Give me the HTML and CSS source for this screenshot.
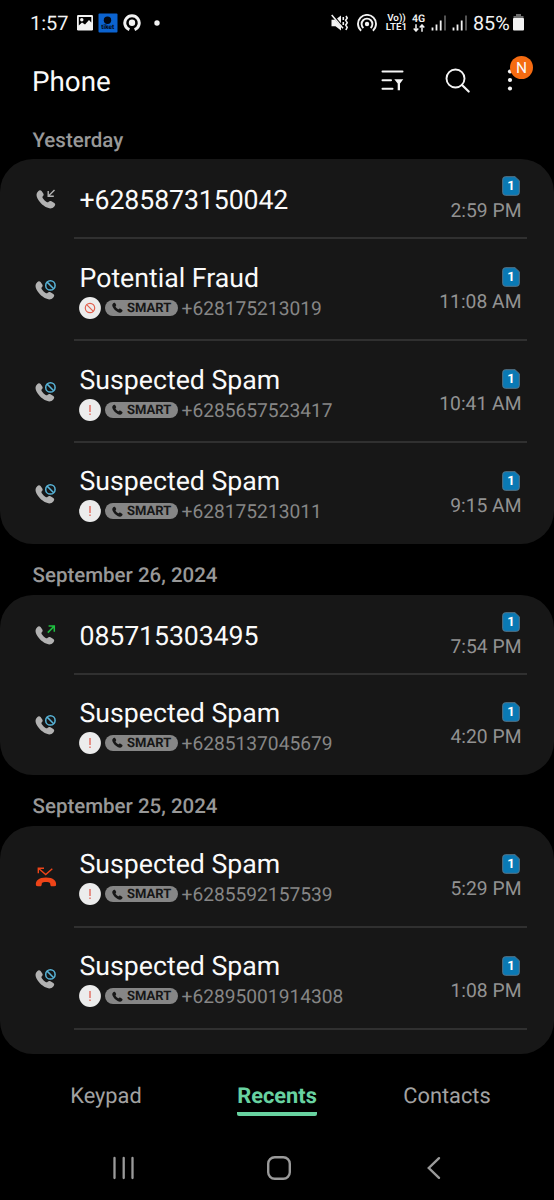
FILE: index.html
```html
<!DOCTYPE html>
<html lang="en">
<head>
<meta charset="utf-8">
<title>Phone</title>
<link rel="stylesheet" href="styles.css">
</head>
<body>
<svg class="defs" width="0" height="0" aria-hidden="true">
  <symbol id="handset" viewBox="0 0 20 20">
    <path d="M2.2 2.3C3.2 1 4.6.8 5.6 2L7.300 4.500C8 5.600 7.600 6.600 6.800 7.300C6.200 8 6.300 8.600 7 9.500C8 10.900 9.200 12 10.600 12.900C11.400 13.400 12 13.400 12.700 12.700C13.500 11.900 14.500 11.700 15.500 12.300L18.300 14C19.500 14.900 19.500 16 18.500 17.200C16.500 19.700 13.800 20 11 18.600C6.300 16.300 2.400 12.200.8 7.700C.2 5.600.6 3.700 2.200 2.300Z"/>
  </symbol>
  <symbol id="incoming" viewBox="0 0 22 22">
    <use href="#handset" x="1" y="1" width="20" height="20" fill="#b2b2b2"/>
    <path d="M19.500 2L13.500 8M13.200 3V8.300H18.800" fill="none" stroke="#b2b2b2" stroke-width="1.400"/>
  </symbol>
  <symbol id="outgoing" viewBox="0 0 22 22">
    <use href="#handset" x="0" y="1" width="20" height="20" fill="#b2b2b2"/>
    <path d="M12.800 8.600L19 2.400M13.600 2H19.300V7.800" fill="none" stroke="#1fc040" stroke-width="1.500"/>
  </symbol>
  <symbol id="blocked" viewBox="0 0 22 22">
    <use href="#handset" x="0" y="1" width="20" height="20" fill="#b2b2b2"/>
    <circle cx="15.400" cy="6.400" r="6.200" fill="#171717"/>
    <circle cx="15.400" cy="6.400" r="4.700" fill="none" stroke="#58b4d8" stroke-width="1.500"/>
    <path d="M12.100 3.100L18.700 9.700" stroke="#58b4d8" stroke-width="1.500"/>
  </symbol>
  <symbol id="missed" viewBox="0 0 22 22">
    <path d="M.9 18.800C.5 15 3.500 11.600 11 11.600S21.500 15 21.100 18.800C21 20 20.400 20.200 19.300 20.200H17C15.800 20.200 15.300 19.600 15.300 18.400C15.300 17 14.800 16.600 13.500 16.300C12 16 10 16 8.500 16.300C7.200 16.600 6.700 17 6.700 18.400C6.700 19.600 6.200 20.200 5 20.200H2.700C1.600 20.200 1 20 .9 18.800Z" fill="#ee4418"/>
    <path d="M17.300 2.800L10.700 8.600L4 2.800M3.300 7.300V2.200H9" fill="none" stroke="#ee4418" stroke-width="1.400"/>
  </symbol>
  <symbol id="warn" viewBox="0 0 22 22">
    <circle cx="11" cy="11" r="10.900" fill="#ececec"/>
    <path d="M11 6V13M11 14.500V16.100" stroke="#e2695c" stroke-width="1.400"/>
  </symbol>
  <symbol id="fraud" viewBox="0 0 22 22">
    <circle cx="11" cy="11" r="10.900" fill="#ececec"/>
    <circle cx="11" cy="11" r="4.700" fill="none" stroke="#e2614f" stroke-width="1.200"/>
    <path d="M7.700 7.700L14.300 14.300" stroke="#e2614f" stroke-width="1.200"/>
  </symbol>
  <symbol id="signal" viewBox="0 0 16 16">
    <path d="M1.500 12.500V15.500M5.500 9.500V15.500M9.700 5.500V15.500" stroke="#f2f2f2" stroke-width="1.800"/>
    <path d="M14 .5V15.500" stroke="#5c5c5c" stroke-width="1.800"/>
  </symbol>
  <symbol id="sim" viewBox="0 0 18 20">
    <path d="M3.400.7H13L17.300 4.700V16.500Q17.300 19.300 14.600 19.300H3.400Q.7 19.300.7 16.600V3.400Q.7.700 3.400.700Z" fill="#0a79b4" stroke="#56768a" stroke-width="1"/>
  </symbol>
</svg>

<div class="screen">
  <div class="status">
    <span class="clock">1:57</span>
    <svg class="s-picture" width="16" height="16" viewBox="0 0 16 16"><rect width="16" height="15.500" rx="1.200" fill="#f2f2f2"/><path d="M1.800 10.500L5 7.500L8 9.500L12 5L14.300 7.500V2H1.800Z" fill="#000"/><circle cx="4.800" cy="4.800" r="1.700" fill="#f2f2f2"/></svg>
    <svg class="s-tiket" width="20" height="20" viewBox="0 0 20 20"><rect x=".5" y=".5" width="19" height="19" rx="1" fill="#0b63d0"/><circle cx="9.500" cy="7.200" r="3.700" fill="#03070f"/><text x="9.800" y="16.200" class="tiket-text">tiket</text></svg>
    <svg class="s-ring" width="18" height="18" viewBox="0 0 18 18"><path d="M6.400 15.700A7.200 7.200 0 1 1 11.600 15.700" fill="none" stroke="#f2f2f2" stroke-width="3"/><circle cx="9" cy="8.800" r="3.200" fill="#f2f2f2"/></svg>
    <svg class="s-dot" width="6" height="6" viewBox="0 0 6 6"><circle cx="3" cy="3" r="2.700" fill="#f2f2f2"/></svg>
    <div class="status-right">
      <svg class="s-mute" width="17" height="18" viewBox="0 0 17 18"><path d="M.5 5.700H4L10 12.500V16.500L4.500 12.200H.5Z" fill="#f2f2f2"/><path d="M6 4.500L10 1.500V9.300Z" fill="#f2f2f2"/><path d="M.7 1L12 14.300" stroke="#f2f2f2" stroke-width="1.500"/><path d="M12.300 3V6M12.300 8V11M15 2L16.200 4L14.700 6.300L16.200 8.700L14.700 11L16.200 13.400L14.900 16" fill="none" stroke="#f2f2f2" stroke-width="1.600"/></svg>
      <svg class="s-hotspot" width="20" height="18" viewBox="0 0 20 18"><circle cx="10" cy="10" r="2.200" fill="#f2f2f2"/><path d="M6.400 14A5.400 5.400 0 1 1 13.600 14M4.100 16.700A9 9 0 1 1 15.900 16.700" fill="none" stroke="#f2f2f2" stroke-width="1.900"/></svg>
      <span class="volte"><span>Vo))</span><span>LTE1</span></span>
      <span class="fourg"><span>4G</span><svg width="12" height="8" viewBox="0 0 12 8"><path d="M3 .3V7M.7 4.500L3 7L5.300 4.500M9 7.700V1M6.700 3.500L9 1L11.300 3.500" fill="none" stroke="#f2f2f2" stroke-width="1.500"/></svg></span>
      <svg class="s-sig" width="16" height="16"><use href="#signal"/></svg>
      <svg class="s-sig" width="16" height="16"><use href="#signal"/></svg>
      <span class="percent">85%</span>
      <svg class="s-battery" width="11" height="17" viewBox="0 0 11 17"><path d="M3 0H8V2H10.500V5H.5V2H3Z" fill="#6c6c6c"/><rect y="4" width="11" height="12.500" rx="1" fill="#f2f2f2"/></svg>
    </div>
  </div>

  <header class="appbar">
    <h1>Phone</h1>
    <svg class="a-filter" width="24" height="24" viewBox="0 0 24 24"><path d="M2.500 3.500H22.500M2.500 12.200H11M2.500 20.700H12.500" stroke="#f5f5f5" stroke-width="2" stroke-linecap="round"/><path d="M14.300 11.200H23.300L20 15.500V22.300H17.700V15.500Z" fill="#f5f5f5"/></svg>
    <svg class="a-search" width="26" height="26" viewBox="0 0 26 26"><circle cx="10.500" cy="10.500" r="9" fill="none" stroke="#f5f5f5" stroke-width="1.900"/><path d="M17 17L23.700 23.500" stroke="#f5f5f5" stroke-width="2.200" stroke-linecap="round"/></svg>
    <div class="more">
      <svg width="6" height="22" viewBox="0 0 6 22"><g fill="#f5f5f5"><circle cx="3" cy="2.500" r="2.100"/><circle cx="3" cy="11" r="2.100"/><circle cx="3" cy="19.500" r="2.100"/></g></svg>
      <span class="new-badge">N</span>
    </div>
  </header>

  <main class="log">
    <h2 class="first">Yesterday</h2>
    <section class="card">
      <div class="row short">
        <svg class="kind"><use href="#incoming"/></svg>
        <div class="who"><div class="name">+6285873150042</div></div>
        <div class="when"><span class="sim"><svg><use href="#sim"/></svg><b>1</b></span><span>2:59 PM</span></div>
      </div>
      <div class="row">
        <svg class="kind"><use href="#blocked"/></svg>
        <div class="who"><div class="name">Potential Fraud</div>
          <div class="detail"><svg class="flag"><use href="#fraud"/></svg><span class="smart"><svg><use href="#handset"/></svg><b>SMART</b></span><span class="number">+628175213019</span></div></div>
        <div class="when"><span class="sim"><svg><use href="#sim"/></svg><b>1</b></span><span>11:08 AM</span></div>
      </div>
      <div class="row">
        <svg class="kind"><use href="#blocked"/></svg>
        <div class="who"><div class="name">Suspected Spam</div>
          <div class="detail"><svg class="flag"><use href="#warn"/></svg><span class="smart"><svg><use href="#handset"/></svg><b>SMART</b></span><span class="number">+6285657523417</span></div></div>
        <div class="when"><span class="sim"><svg><use href="#sim"/></svg><b>1</b></span><span>10:41 AM</span></div>
      </div>
      <div class="row last">
        <svg class="kind"><use href="#blocked"/></svg>
        <div class="who"><div class="name">Suspected Spam</div>
          <div class="detail"><svg class="flag"><use href="#warn"/></svg><span class="smart"><svg><use href="#handset"/></svg><b>SMART</b></span><span class="number">+628175213011</span></div></div>
        <div class="when"><span class="sim"><svg><use href="#sim"/></svg><b>1</b></span><span>9:15 AM</span></div>
      </div>
    </section>

    <h2>September 26, 2024</h2>
    <section class="card">
      <div class="row short">
        <svg class="kind"><use href="#outgoing"/></svg>
        <div class="who"><div class="name">085715303495</div></div>
        <div class="when"><span class="sim"><svg><use href="#sim"/></svg><b>1</b></span><span>7:54 PM</span></div>
      </div>
      <div class="row last">
        <svg class="kind"><use href="#blocked"/></svg>
        <div class="who"><div class="name">Suspected Spam</div>
          <div class="detail"><svg class="flag"><use href="#warn"/></svg><span class="smart"><svg><use href="#handset"/></svg><b>SMART</b></span><span class="number">+6285137045679</span></div></div>
        <div class="when"><span class="sim"><svg><use href="#sim"/></svg><b>1</b></span><span>4:20 PM</span></div>
      </div>
    </section>

    <h2>September 25, 2024</h2>
    <section class="card continued">
      <div class="row">
        <svg class="kind"><use href="#missed"/></svg>
        <div class="who"><div class="name">Suspected Spam</div>
          <div class="detail"><svg class="flag"><use href="#warn"/></svg><span class="smart"><svg><use href="#handset"/></svg><b>SMART</b></span><span class="number">+6285592157539</span></div></div>
        <div class="when"><span class="sim"><svg><use href="#sim"/></svg><b>1</b></span><span>5:29 PM</span></div>
      </div>
      <div class="row">
        <svg class="kind"><use href="#blocked"/></svg>
        <div class="who"><div class="name">Suspected Spam</div>
          <div class="detail"><svg class="flag"><use href="#warn"/></svg><span class="smart"><svg><use href="#handset"/></svg><b>SMART</b></span><span class="number">+62895001914308</span></div></div>
        <div class="when"><span class="sim"><svg><use href="#sim"/></svg><b>1</b></span><span>1:08 PM</span></div>
      </div>
    </section>
  </main>

  <nav class="tabs">
    <span>Keypad</span>
    <span class="active">Recents</span>
    <span>Contacts</span>
  </nav>

  <div class="navbar">
    <svg width="24" height="24" viewBox="0 0 24 24"><path d="M2.500 2V22M11.700 2V22M20.500 2V22" stroke="#9a9a9a" stroke-width="2.300" stroke-linecap="round"/></svg>
    <svg width="26" height="26" viewBox="0 0 26 26"><rect x="2.200" y="2.200" width="21.600" height="21.600" rx="6.500" fill="none" stroke="#9a9a9a" stroke-width="2.400"/></svg>
    <svg width="24" height="24" viewBox="0 0 24 24"><path d="M17 2.200L6.800 12L17 21.800" fill="none" stroke="#9a9a9a" stroke-width="2.400" stroke-linecap="round"/></svg>
  </div>
</div>
</body>
</html>
```
FILE: styles.css
```css
* { box-sizing: border-box; }
body { margin: 0; background: #000; font-family: Roboto, "Liberation Sans", sans-serif; text-rendering: geometricPrecision; }
svg { display: block; flex: none; }
.defs { position: absolute; }
.screen { width: 554px; height: 1200px; display: flex; flex-direction: column; background: #000; color: #fafafa; overflow: hidden; }

.status { height: 45px; padding: 0 30px 0 30px; display: flex; align-items: center; color: #f2f2f2; flex: none; }
.clock { width: 47px; font-size: 20px; line-height: 24px; }
.s-picture { margin-right: 5px; }
.s-tiket { margin-right: 5px; }
.s-ring { margin-right: 13px; }
.tiket-text { font: 700 6.5px Roboto, sans-serif; fill: #03070f; text-anchor: middle; }
.status-right { margin-left: auto; display: flex; align-items: center; }
.s-mute { margin-right: 9px; }
.s-hotspot { margin-right: 9px; }
.volte { width: 25px; font-size: 9.8px; font-weight: 600; line-height: 9px; display: flex; flex-direction: column; align-items: center; padding-right: 4px; }
.fourg { width: 15px; margin-right: 5px; font-size: 10.5px; font-weight: 600; line-height: 9px; display: flex; flex-direction: column; align-items: center; gap: 1px; }
.s-sig { margin-right: 5px; margin-top: 1px; }
.percent { width: 40px; font-size: 19.8px; line-height: 24px; padding-top: 2px; }

.appbar { height: 76px; padding-left: 32px; display: flex; align-items: flex-start; flex: none; }
h1 { margin: 19px 0 0; width: 348px; font-size: 27.8px; line-height: 36px; font-weight: 400; }
.a-filter { margin-top: 23px; }
.a-search { margin: 23px 0 0 41px; }
.more { position: relative; margin: 24px 0 0 36px; }
.new-badge { position: absolute; left: 3px; top: -13px; width: 23px; height: 23px; border-radius: 50%; background: #f56b11; font-size: 15.5px; line-height: 24px; text-align: center; }

.log { flex: none; }
h2 { margin: 0; height: 51px; padding: 7px 0 0 32.5px; font-size: 20.5px; line-height: 50px; font-weight: 500; color: #989898; }
h2.first { height: 38px; padding-top: 1px; line-height: 38px; }
.card { background: #171717; border-radius: 33px; }
.card.continued { padding-bottom: 24px; }
.row { height: 102px; padding: 0 32.5px 0 35px; display: flex; align-items: center; background: linear-gradient(#303030, #303030) 74px 100% / 453px 2px no-repeat; }
.row.short { height: 80px; }
.row.last { background: none; height: 101px; }
.short + .row.last { height: 100px; }
.kind { width: 22px; height: 22px; margin-right: 22px; }
.who { flex: 1; padding-top: 1px; }
.continued .who { padding-top: 0; }
.name { padding-left: .5px; font-size: 26.7px; line-height: 30px; }
.short .name { letter-spacing: -0.1px; }
.detail { display: flex; align-items: center; margin-top: 4px; height: 22px; }
.flag { width: 22px; height: 22px; }
.smart { width: 73px; height: 16px; margin: 0 3.5px 0 4px; padding-left: 7px; display: flex; align-items: center; gap: 4px; background: #868686; color: #171717; border-radius: 8px; font-size: 13px; line-height: 16px; }
.smart b { padding-top: 2px; font-weight: 700; }
.smart svg { width: 11px; height: 11px; fill: #171717; }
.number { font-size: 19.2px; line-height: 22px; padding-top: 2px; color: #868686; }
.when { display: flex; flex-direction: column; align-items: flex-end; gap: 4px; color: #929292; font-size: 19.3px; line-height: 22px; }
.sim { display: grid; place-items: center; width: 18px; height: 20px; margin-right: 1.5px; }
.sim svg, .sim b { grid-area: 1 / 1; }
.sim svg { width: 18px; height: 20px; }
.sim b { color: #fff; font-size: 13px; line-height: 18px; padding-top: 2px; font-weight: 700; }

.tabs { height: 82px; padding-top: 28px; display: grid; grid-template-columns: 212px 130px 210px; justify-items: center; align-items: start; font-size: 21.8px; line-height: 30px; color: #a2a2a2; }
.tabs .active { color: #68d2a0; font-weight: 700; border-bottom: 4px solid #68d2a0; border-radius: 2px; }
.navbar { height: 64px; padding: 0 108px 0 112px; display: flex; align-items: center; justify-content: space-between; }
```
